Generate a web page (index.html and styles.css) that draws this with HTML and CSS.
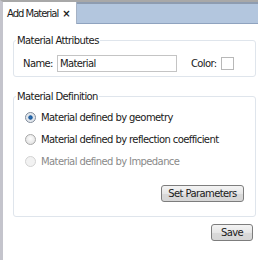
FILE: index.html
```html
<!DOCTYPE html>
<html>
<head>
<meta charset="utf-8">
<link rel="stylesheet" href="styles.css">
</head>
<body>
<div class="frame">
  <div class="tabbar">
    <div class="tab"><span class="tab-title">Add Material</span><span class="tab-close">×</span></div>
    <div class="tab-fill"></div>
  </div>
  <div class="content">
    <fieldset class="group g1">
      <legend>Material Attributes</legend>
      <div class="row">
        <label class="lbl">Name:</label>
        <input class="txt" type="text" value="Material">
        <label class="lbl color-lbl">Color:</label>
        <span class="swatch"></span>
      </div>
    </fieldset>
    <fieldset class="group g2">
      <legend>Material Definition</legend>
      <div class="radios">
        <div class="radio-row"><span class="radio on"></span><span>Material defined by geometry</span></div>
        <div class="radio-row"><span class="radio"></span><span>Material defined by reflection coefficient</span></div>
        <div class="radio-row disabled"><span class="radio dis"></span><span>Material defined by Impedance</span></div>
      </div>
      <div class="btn-row"><button class="btn set">Set Parameters</button></div>
    </fieldset>
    <div class="save-row"><button class="btn save">Save</button></div>
  </div>
</div>
</body>
</html>
```

FILE: styles.css
```css
html, body {
  margin: 0;
  padding: 0;
  background: #fff;
  font-family: "DejaVu Sans", Verdana, sans-serif;
  font-size: 10px;
  color: #1a1a1a;
}
.frame {
  width: 258px;
  height: 260px;
  box-sizing: border-box;
  border-left: 3px solid #c4c4cc;
  border-top: 2px solid #a8a8a8;
  overflow: hidden;
  letter-spacing: -0.6px;
}
.tabbar {
  display: flex;
  height: 22px;
}
.tab {
  width: 74px;
  background: #fff;
  box-sizing: border-box;
  border-right: 1px solid #a5b2c5;
  display: flex;
  align-items: center;
  padding-left: 4px;
  padding-top: 1px;
  white-space: nowrap;
}
.tab-title {
  letter-spacing: -1px;
}
.tab-close {
  margin-left: 4px;
  font-weight: bold;
  font-size: 10px;
}
.tab-fill {
  flex: 1;
  background: #b3c6de;
  border-top: 2px solid #8e9cb0;
  border-bottom: 1px solid #8fa3bf;
  box-sizing: border-box;
}
.content {
  padding: 0 2px 0 10px;
}
.group {
  margin: 0;
  border: 1px solid #dfe5ec;
  border-radius: 3px;
  padding: 0;
}
.group legend {
  padding: 0 1px;
  margin-left: 2px;
}
.g1 {
  margin-top: 11px;
  height: 42px;
  box-sizing: border-box;
}
.row {
  display: flex;
  align-items: center;
  padding: 9px 0 0 9px;
}
.txt {
  margin: 0 0 0 4px;
  width: 120px;
  height: 17px;
  box-sizing: border-box;
  border: 1px solid #c4c4c4;
  padding: 0 2px;
  font: inherit;
  letter-spacing: -0.6px;
  color: #1a1a1a;
}
.color-lbl { margin-left: 14px; }
.swatch {
  width: 11px;
  height: 11px;
  border: 1px solid #b8b8b8;
  margin-left: 4px;
  background: #fff;
}
.g2 {
  margin-top: 14px;
  height: 126px;
  box-sizing: border-box;
}
.radios {
  display: flex;
  flex-direction: column;
  gap: 10px;
  padding: 9px 0 0 11px;
}
.radio-row {
  display: flex;
  align-items: center;
  gap: 5px;
  height: 12px;
}
.radio-row.disabled { color: #8a8a8a; }
.radio {
  width: 9px;
  height: 9px;
  border-radius: 50%;
  border: 1px solid #a8a8a8;
  background: radial-gradient(circle at 50% 40%, #fdfdfd 0%, #e2e2e2 80%);
  box-sizing: content-box;
}
.radio.on {
  border-color: #7f8a99;
  background: radial-gradient(circle at 50% 50%, #2a6fb5 0, #1c5a9c 28%, #dde3ea 40%, #eef1f4 100%);
}
.radio.dis {
  border-color: #d3d3d3;
  background: #f2f2f2;
}
.btn-row {
  display: flex;
  justify-content: flex-end;
  padding: 18px 11px 0 0;
}
.btn {
  font: inherit;
  letter-spacing: -0.6px;
  color: #1a1a1a;
  border: 1px solid #7d7d7d;
  border-radius: 3px;
  background: linear-gradient(#f4f4f4, #e6e6e6 50%, #d9d9d9 51%, #d6d6d6);
  height: 17px;
  padding: 0;
  margin: 0;
}
.set { width: 83px; }
.save-row {
  display: flex;
  justify-content: flex-end;
  padding: 7px 3px 0 0;
}
.save { width: 42px; }
```
